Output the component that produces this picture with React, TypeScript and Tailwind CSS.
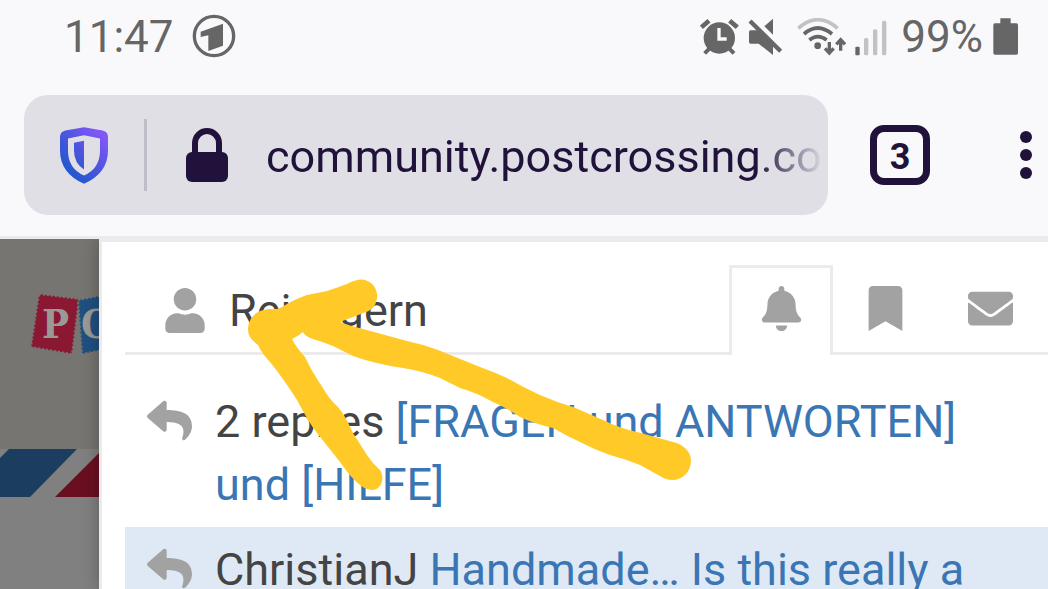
import { FaBell, FaBookmark, FaEnvelope, FaReply, FaUser } from "react-icons/fa";

const notifications = [
  {
    who: "2 replies",
    title: "[FRAGEN und ANTWORTEN] und [HILFE]",
    unread: false,
  },
  {
    who: "ChristianJ",
    title: "Handmade… Is this really a",
    unread: true,
  },
];

const tabs = [
  { name: "Bookmarks", Icon: FaBookmark },
  { name: "Messages", Icon: FaEnvelope },
];

function StatusBar() {
  return (
    <div className="flex h-[71px] items-center pl-16 pr-[30px] pt-0.5 text-[44px] text-[#666666]">
      <span>11:47</span>
      <svg viewBox="0 0 132 132" className="mb-0.5 ml-[18px] h-11 w-11">
        <circle cx="66" cy="66" r="59" fill="none" stroke="currentColor" strokeWidth="10" />
        <path d="M26 53L93 29V95L49 111V64L26 69Z" fill="currentColor" />
      </svg>
      <div className="ml-auto flex items-center">
        <svg viewBox="0 0 120 114" className="h-[38px] w-10" fill="none" stroke="currentColor">
          <circle cx="58" cy="60" r="47" fill="currentColor" stroke="none" />
          <path d="M4 28L27 8M89 8L112 28" strokeWidth="14" />
          <path d="M14 106L28 92M102 106L88 92" strokeWidth="12" />
          <path d="M57 30V63H80" stroke="#f9f9fb" strokeWidth="10" />
        </svg>
        <svg viewBox="0 0 105 114" className="ml-2 h-[38px] w-[35px]" fill="currentColor">
          <path d="M8 37H32L75 78V111L32 77H8Q3 77 3 72V42Q3 37 8 37Z" />
          <path d="M49 25L75 2V50Z" />
          <path d="M15 2L105 92" stroke="#f9f9fb" strokeWidth="9" />
          <path d="M6 9L98 100" stroke="currentColor" strokeWidth="13" />
        </svg>
        <svg viewBox="0 0 150 114" className="ml-3.5 h-[38px] w-[50px]" fill="none" stroke="currentColor">
          <path d="M4 31Q62 -21 122 31" stroke="#c2c2c4" strokeWidth="11" />
          <path d="M21 48Q62 12 105 48" strokeWidth="11" />
          <path d="M37 66Q62 46 89 66" strokeWidth="11" />
          <circle cx="62" cy="83" r="10" fill="currentColor" stroke="none" />
          <path d="M97 72V104M84 91L97 105L110 91" strokeWidth="10" />
          <path d="M131 98V66M118 79L131 65L144 79" strokeWidth="10" />
        </svg>
        <svg viewBox="0 0 96 114" className="ml-2 h-[38px] w-8" fill="#c2c2c4">
          <rect x="1" y="86" width="13" height="26" rx="3" fill="#666666" />
          <rect x="27" y="60" width="13" height="52" rx="5" />
          <rect x="54" y="34" width="13" height="78" rx="5" />
          <rect x="81" y="8" width="13" height="104" rx="5" />
        </svg>
        <span className="ml-3.5">99%</span>
        <svg viewBox="0 0 75 111" className="ml-2.5 h-[37px] w-[25px]" fill="currentColor">
          <path d="M22 1H53V16H70Q75 16 75 21V105Q75 110 70 110H6Q1 110 1 105V21Q1 16 6 16H22Z" />
        </svg>
      </div>
    </div>
  );
}

function AddressBar() {
  return (
    <div className="flex items-center border-b-[3px] border-[#ebebeb] pl-6 pr-2.5 pt-6 pb-[21px] text-[#20123a]">
      <div className="flex h-[120px] min-w-0 flex-1 items-center rounded-[24px] bg-[#e0dfe6] pl-9 pr-1">
        <svg viewBox="0 0 144 170" className="h-[57px] w-12 shrink-0">
          <defs>
            <linearGradient id="shield" x1="0.15" y1="0.9" x2="0.85" y2="0.1">
              <stop offset="0" stopColor="#1a58cc" />
              <stop offset="0.5" stopColor="#4a55dc" />
              <stop offset="1" stopColor="#8257f8" />
            </linearGradient>
          </defs>
          <path
            fill="url(#shield)"
            fillRule="evenodd"
            d="M72 0L128 10Q144 14 144 30V70Q144 138 72 170Q0 138 0 70V30Q0 14 16 10ZM72 24L24 34V70Q24 124 72 145Q120 124 120 70V34ZM72 41V127Q42 108 42 70V47Z"
          />
        </svg>
        <div className="ml-9 h-[72px] w-[3px] shrink-0 bg-[#bfbec8]" />
        <svg viewBox="0 0 126 162" className="ml-[39px] h-[54px] w-[42px] shrink-0">
          <path d="M27 84V45A36 36 0 0 1 99 45V84" fill="none" stroke="currentColor" strokeWidth="18" />
          <rect y="72" width="126" height="90" rx="18" fill="currentColor" />
        </svg>
        <input
          aria-label="Address"
          readOnly
          value="community.postcrossing.com"
          className="ml-[38px] mt-1 h-16 w-0 min-w-0 flex-1 bg-transparent text-[45px] outline-none [mask-image:linear-gradient(to_right,black_88%,transparent)]"
        />
      </div>
      <button
        aria-label="Open tabs"
        className="ml-[42px] flex h-[60px] w-[60px] items-center justify-center rounded-[14px] border-[7px] border-[#20123a] pt-1 text-[36px] font-bold"
      >
        3
      </button>
      <button aria-label="Menu" className="ml-[84px] flex w-6 flex-col items-center gap-1.5">
        <span className="h-3 w-3 rounded-full bg-[#20123a]" />
        <span className="h-3 w-3 rounded-full bg-[#20123a]" />
        <span className="h-3 w-3 rounded-full bg-[#20123a]" />
      </button>
    </div>
  );
}

// the forum page, dimmed behind the open menu
function DimmedPage() {
  return (
    <div className="flex w-[99px] shrink-0 flex-col bg-[#808080]">
      <div className="h-[210px] bg-[#777572] pt-[51px]">
        <svg viewBox="0 0 99 70" className="h-[70px] w-full" fontFamily="DejaVu Serif" fontWeight="bold">
          <g stroke="#777572" strokeWidth="2" strokeDasharray="2 2">
            <path d="M39 4L79 9L72 64L31 57Z" fill="#8a1832" />
            <path d="M78 10L120 2L122 56L82 64Z" fill="#205080" />
          </g>
          <g fill="#9b9996" fontSize="40" fontStretch="condensed">
            <text x="42" y="48">P</text>
            <text x="81" y="48">O</text>
          </g>
        </svg>
      </div>
      <svg viewBox="0 0 99 48" className="h-12 w-full">
        <path d="M9 0H77L30 48H0V9Z" fill="#1a3d60" />
        <path d="M99 4V48H55Z" fill="#6a0f22" />
      </svg>
    </div>
  );
}

function UserMenu() {
  return (
    <div className="min-w-0 flex-1 border-l-[3px] border-t-[3px] border-[#ebebeb] bg-white pl-[23px] pt-[23px] shadow-[0_0_16px_rgba(0,0,0,0.3)]">
      <div className="flex h-[90px] text-[45px] text-[#a2a2a2]">
        <button className="flex flex-1 items-center gap-6 border-b-[3px] border-[#ebebeb] pl-10 pt-1">
          <FaUser className="w-10" />
          <span className="text-[#444444]">Reisegern</span>
        </button>
        <button
          aria-label="Notifications"
          className="flex w-[104px] items-center justify-center border-x-[3px] border-t-[3px] border-[#ebebeb] pb-1.5"
        >
          <FaBell />
        </button>
        {tabs.map(({ name, Icon }) => (
          <button
            key={name}
            aria-label={name}
            className="flex w-[105px] items-center justify-center border-b-[3px] border-[#ebebeb]"
          >
            <Icon />
          </button>
        ))}
        <div className="w-[5px] border-b-[3px] border-[#ebebeb]" />
      </div>
      <ul className="pt-6">
        {notifications.map((item) => (
          <li key={item.who} className={item.unread ? "bg-[#dfe9f5]" : ""}>
            <a href="#" className="flex gap-[23px] py-[11px] pl-[22px] pr-16 text-[45px] leading-[63px] text-[#444444]">
              <FaReply className="mt-2 shrink-0 text-[#a2a2a2]" />
              <span>
                {item.who} <span className="text-[#3b76b4]">{item.title}</span>
              </span>
            </a>
          </li>
        ))}
      </ul>
    </div>
  );
}

function Arrow() {
  return (
    <svg viewBox="0 0 450 220" className="pointer-events-none absolute left-[245px] top-[275px] h-[220px] w-[450px]">
      <path
        fill="#ffca28"
        d="M3 55C3 46 8 35 25 34Q32 35 37 32Q48 25 62 20L82 16Q91 13 102 9C112 4 117 4 120 5C130 8 133 17 132 23C131 31 127 35 121 37L95 47Q105 51 118 54L162 66Q177 69 193 75L235 92Q249 97 262 103Q279 113 295 120Q311 127 328 132L358 145Q374 153 392 157L428 167C438 169 446 177 446 185C446 197 438 205 427 205Q421 205 415 201L395 190Q380 184 365 180Q350 175 335 167Q322 161 308 153Q290 149 275 142Q262 133 248 127Q230 117 215 113L195 103Q177 96 158 93Q130 89 108 81L88 71Q75 66 65 63Q59 60 58 57Q52 62 47 64Q51 72 60 82Q67 97 78 113Q84 124 93 132Q100 140 108 158L122 180Q127 188 135 195C140 202 137 215 127 215Q119 214 115 210Q106 203 95 187L72 158Q64 148 52 125Q38 103 25 87Q17 79 13 70Q3 63 3 55Z"
      />
    </svg>
  );
}

function App() {
  return (
    <div className="relative flex h-screen flex-col overflow-hidden bg-[#f9f9fb] font-[Roboto,sans-serif]">
      <StatusBar />
      <AddressBar />
      <div className="flex min-h-0 flex-1 overflow-hidden">
        <DimmedPage />
        <UserMenu />
      </div>
      <Arrow />
    </div>
  );
}

export default App;
